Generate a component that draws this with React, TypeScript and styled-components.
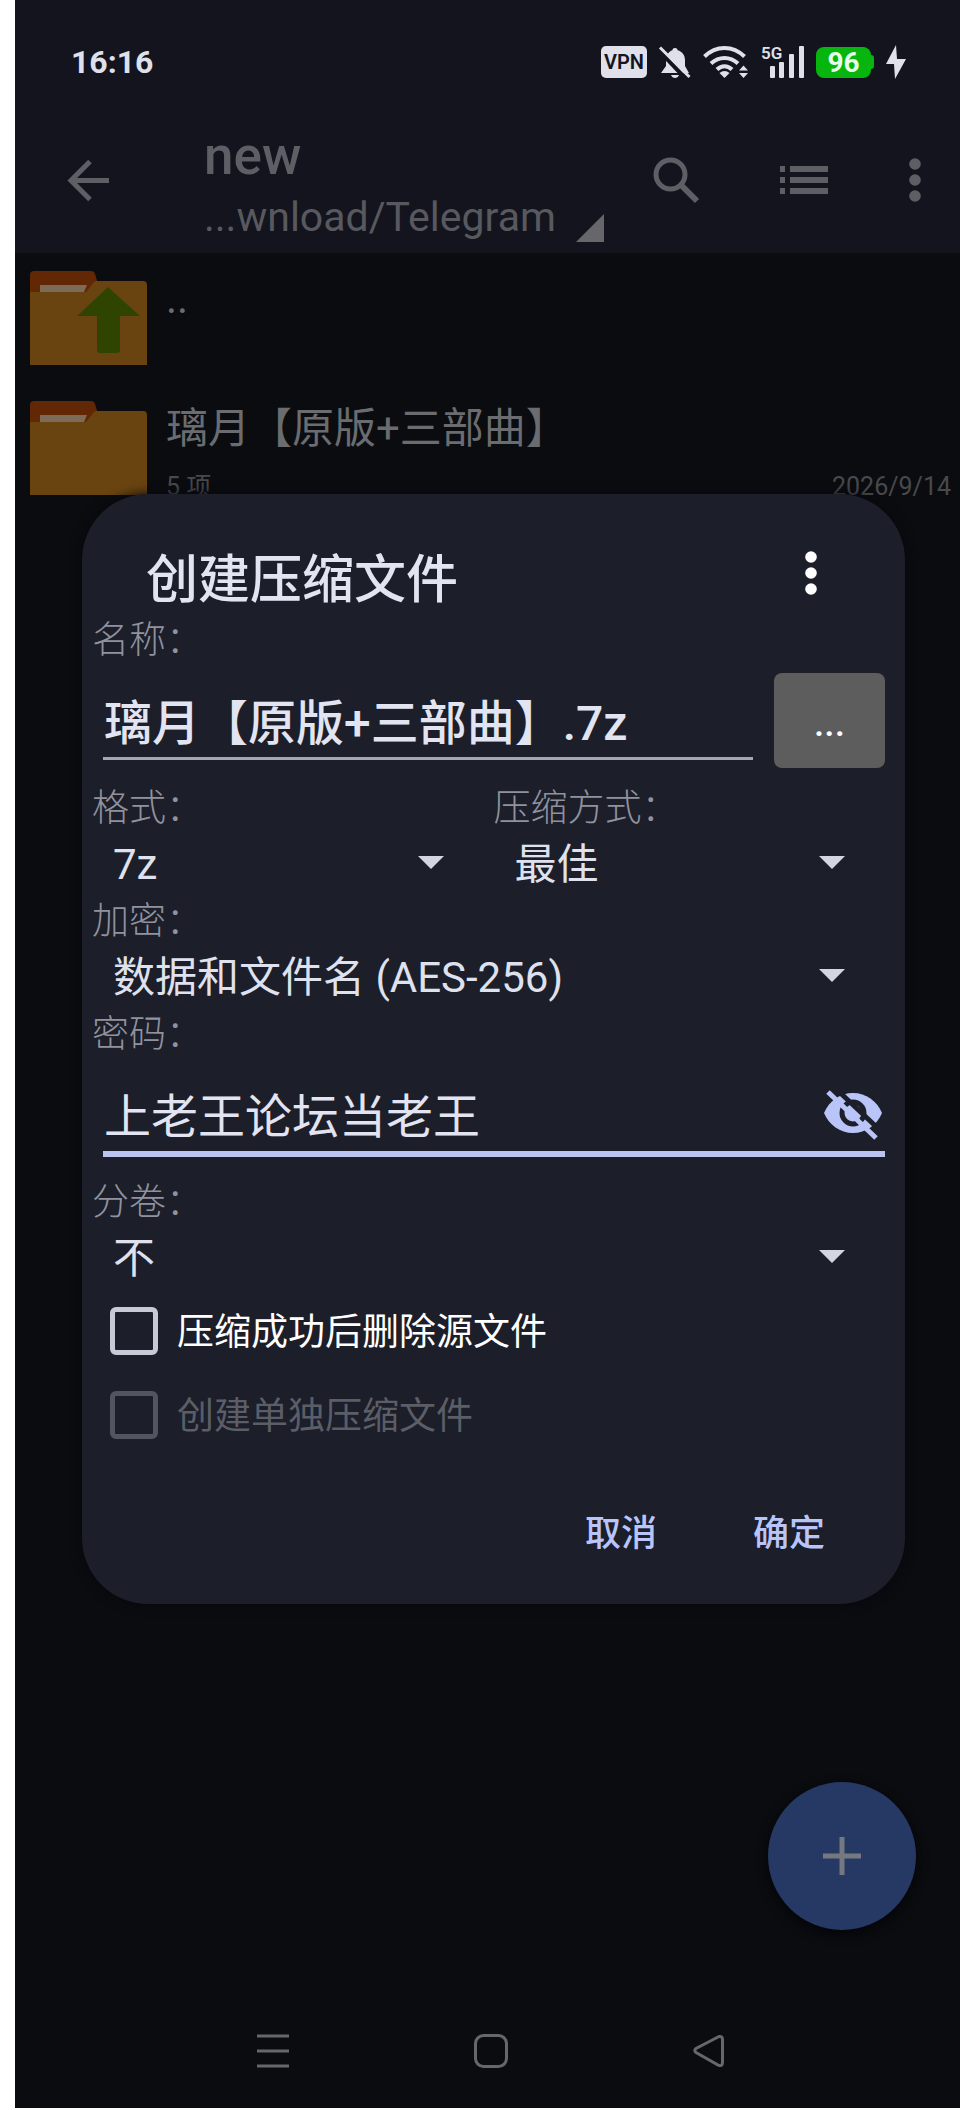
import React, { useState } from 'react';
import styled, { createGlobalStyle } from 'styled-components';

const GlobalStyle = createGlobalStyle`
  *, *::before, *::after { box-sizing: border-box; }
  html, body { margin: 0; background: #ffffff; }
  body, button, input, select {
    font-family: Roboto, "Noto Sans CJK SC", sans-serif;
  }
  h1, h2, p, ul { margin: 0; padding: 0; font-weight: 400; }
  ul { list-style: none; }
  svg { display: block; flex: none; overflow: visible; }
`;

/* ---------- screen ---------- */

const Screen = styled.div`
  position: relative;
  display: flex;
  flex-direction: column;
  min-height: calc(100vh - 2px);
  margin: 0 0 2px 15px;
  background: #0a0c10;
  overflow: hidden;
`;

const Header = styled.header`
  background: #13141e;
`;

const StatusBar = styled.div`
  display: flex;
  align-items: center;
  justify-content: space-between;
  height: 107px;
  padding: 17px 54px 0 56px;
  color: #dfe0ea;
`;

const Clock = styled.time`
  font-size: 32px;
  font-weight: 700;
`;

const StatusIcons = styled.div`
  display: flex;
  align-items: center;
  gap: 12px;
`;

const VpnBadge = styled.span`
  width: 46px;
  border-radius: 5px;
  background: #dfe0ea;
  color: #13141e;
  font-size: 20px;
  font-weight: 600;
  line-height: 32px;
  text-align: center;
`;

const Battery = styled.span`
  display: flex;
  align-items: center;
  color: #e6ffe6;
  font-size: 28px;
  font-weight: 700;
  line-height: 31px;

  span {
    width: 55px;
    border-radius: 8px;
    background: #07b50f;
    text-align: center;
  }

  &::after {
    content: "";
    width: 3px;
    height: 14px;
    border-radius: 0 3px 3px 0;
    background: #07b50f;
  }
`;

const Toolbar = styled.div`
  display: flex;
  align-items: center;
  height: 146px;
  padding: 0 39px 0 42px;
  color: #5e5e64;
`;

const IconButton = styled.button`
  display: flex;
  padding: 0;
  border: 0;
  background: none;
  color: inherit;
  cursor: pointer;
`;

const Location = styled.div`
  flex: 1;
  min-width: 0;
  margin-left: 84px;
  padding-top: 14px;
`;

const FolderTitle = styled.h1`
  font-size: 53px;
  font-weight: 500;
  line-height: 60px;
`;

const FolderPath = styled.button`
  display: flex;
  align-items: flex-end;
  gap: 20px;
  padding: 0;
  border: 0;
  background: none;
  color: #58595f;
  font-size: 41px;
  line-height: 62px;
  white-space: nowrap;

  svg { margin-bottom: 6px; }
`;

const ToolbarActions = styled.div`
  display: flex;
  align-items: center;
  gap: 81px;
`;

/* ---------- file list ---------- */

const FileList = styled.ul`
  flex: 1;
`;

const FileRow = styled.li`
  display: flex;
  gap: 19px;
  height: 130px;
  padding: 17px 9px 0 15px;
`;

const FileText = styled.div`
  flex: 1;
  display: flex;
  flex-direction: column;
`;

const FileName = styled.p`
  color: #6b6c70;
  font-size: 42px;
  line-height: 58px;
`;

const FileMeta = styled.p`
  display: flex;
  justify-content: space-between;
  margin-top: 12px;
  color: #48494c;
  font-size: 25px;
  line-height: 34px;
`;

const AddButton = styled.button`
  position: absolute;
  right: 44px;
  bottom: 178px;
  display: flex;
  align-items: center;
  justify-content: center;
  width: 148px;
  height: 148px;
  border: 0;
  border-radius: 50%;
  background: #263864;
  color: #75797f;
  box-shadow: 0 4px 12px #040508;
`;

const NavBar = styled.nav`
  display: flex;
  align-items: center;
  justify-content: space-around;
  height: 114px;
  padding: 0 142px 0 149px;
  color: #66676a;
`;

/* ---------- dialog ---------- */

const Overlay = styled.div`
  position: absolute;
  inset: 0;
  display: flex;
  align-items: center;
  padding: 0 55px 11px 67px;
`;

const Dialog = styled.form`
  flex: 1;
  min-width: 0;
  padding: 46px 10px 30px;
  border-radius: 66px;
  background: #1c1e29;
  box-shadow: 0 0 12px #07080c;
`;

const DialogHeader = styled.div`
  display: flex;
  align-items: flex-start;
  justify-content: space-between;
  height: 74px;
  padding: 0 78px 0 54px;
  color: #ffffff;
`;

const DialogTitle = styled.h2`
  color: #e2e4f2;
  font-size: 52px;
  font-weight: 500;
  line-height: 82px;
`;

const MenuButton = styled(IconButton)`
  padding-top: 11px;
`;

const Label = styled.label`
  display: block;
  padding-top: 4px;
  color: #90929e;
  font-size: 37px;
  font-weight: 300;
  line-height: 45px;
`;

const FieldRow = styled.div`
  position: relative;
  display: flex;
  align-items: flex-start;
  gap: 21px;
  height: 119px;
  padding: 10px 10px 0 11px;
`;

const TextInput = styled.input<{ $active?: boolean }>`
  flex: 1;
  min-width: 0;
  height: ${(p) => (p.$active ? 90 : 87)}px;
  padding: 8px 0 0 1px;
  border: 0;
  border-bottom: ${(p) => (p.$active ? '6px solid #b9c4f1' : '3px solid #a4a6b4')};
  outline: 0;
  background: none;
  color: #e2e4f2;
  font-size: ${(p) => (p.$active ? 47 : 48)}px;
  font-weight: ${(p) => (p.$active ? 400 : 500)};
`;

const BrowseButton = styled.button`
  width: 111px;
  height: 95px;
  padding: 6px 0 0;
  border: 0;
  border-radius: 8px;
  background: #5d5d5e;
  color: #ffffff;
  font-size: 37px;
  font-weight: 500;
`;

const RevealButton = styled(IconButton)`
  position: absolute;
  right: 13px;
  top: 33px;
  color: #b9c4f8;
`;

const Columns = styled.div`
  display: grid;
  grid-template-columns: 1fr 1fr;
`;

const SelectBox = styled.div`
  display: grid;
  align-items: center;
  color: #d3d5e2;

  select, svg { grid-area: 1 / 1; }
  svg { justify-self: end; margin-right: 50px; pointer-events: none; }
`;

const Select = styled.select`
  width: 100%;
  height: 64px;
  padding: 3px 80px 0 21px;
  border: 0;
  appearance: none;
  background: none;
  color: #dfe1ee;
  font-size: 42px;
`;

const CheckRow = styled.label<{ $muted?: boolean }>`
  display: flex;
  align-items: center;
  gap: 19px;
  height: 84px;
  padding-left: 18px;
  color: ${(p) => (p.$muted ? '#5b5d67' : '#ffffff')};
  font-size: 37px;
  line-height: 49px;

  span { padding-top: 4px; }
`;

const CheckBox = styled.input`
  appearance: none;
  width: 48px;
  height: 48px;
  margin: 0;
  border: 5px solid #c7c9d6;
  border-radius: 6px;

  &:checked { background: #b9c4f8; }
  &:disabled { border-color: #52545f; }
`;

const Actions = styled.div`
  display: flex;
  justify-content: flex-end;
  gap: 46px;
  padding: 29px 45px 0 0;
`;

const TextButton = styled.button`
  width: 122px;
  height: 88px;
  padding: 0;
  border: 0;
  background: none;
  color: #b9c4f8;
  font-size: 36px;
  font-weight: 500;
`;

/* ---------- icons ---------- */

const BellOffIcon = () => (
  <svg width="32" height="32" viewBox="0 0 32 32" fill="none">
    <path d="M16 2c1.600 0 2.400.8 2.600 2.200C23.500 5.500 26 9.500 26 14v6l4 7H2l5-7v-6C7 9.500 9.500 5.500 13.400 4.200 13.600 2.800 14.400 2 16 2Z" fill="#dfe0ea" />
    <path d="M12 29h8c-.8 2-2.200 3-4 3s-3.200-1-4-3Z" fill="#dfe0ea" />
    <path d="M0 4.500 28 34" stroke="#13141e" strokeWidth="4" />
    <path d="M1 1.500 30.500 31" stroke="#dfe0ea" strokeWidth="3" />
  </svg>
);

const WifiIcon = () => (
  <svg width="46" height="32" viewBox="0 0 46 32" fill="none" stroke="#dfe0ea" strokeWidth="4">
    <path d="M1.500 10.500C13-1 30-1 41.500 10.500" />
    <path d="M8 17.500c8-7.500 19-7.500 27 0" />
    <path d="M14 23.500c4.500-4.500 10.500-4.500 15 0" />
    <path d="m16.500 27 5 5 5-5c-3-2.800-7-2.800-10 0Z" fill="#dfe0ea" stroke="none" />
    <path d="m36 24.500 4.500-5 4.500 5Zm0 2.500 4.500 5 4.500-5Z" fill="#dfe0ea" stroke="none" />
  </svg>
);

const SignalIcon = () => (
  <svg width="43" height="38" viewBox="0 -2 43 38" fill="#dfe0ea">
    <text x="0" y="14" fontSize="17" fontWeight="600" fontFamily="Roboto, sans-serif">5G</text>
    <rect x="9" y="21" width="5" height="12" rx="1" />
    <rect x="18" y="17" width="5" height="16" rx="1" />
    <rect x="28" y="9" width="5" height="24" rx="1" />
    <rect x="38" y="1" width="5" height="32" rx="1" />
  </svg>
);

const BoltIcon = () => (
  <svg width="20" height="34" viewBox="0 0 20 34" fill="#dfe0ea">
    <path d="M10 0 0 19h8l1 15L20 14h-9Z" />
  </svg>
);

const BackIcon = () => (
  <svg width="63" height="63" viewBox="0 0 63 63" fill="none" stroke="currentColor" strokeWidth="5">
    <path d="M52 31.500H13.500M33 12.500l-19 19 19 19" />
  </svg>
);

const CornerIcon = () => (
  <svg width="28" height="28" viewBox="0 0 28 28" fill="#66666b">
    <path d="M28 0v28H0Z" />
  </svg>
);

const SearchIcon = () => (
  <svg width="46" height="46" viewBox="0 0 46 46" fill="none" stroke="currentColor" strokeWidth="5">
    <circle cx="17.500" cy="17.500" r="14.500" />
    <path d="m29 29 15 15" strokeWidth="6" />
  </svg>
);

const ListIcon = () => (
  <svg width="48" height="28" viewBox="0 0 48 28" fill="currentColor">
    {[0, 11, 22].map((y) => (
      <React.Fragment key={y}>
        <rect y={y} width="5" height="6" />
        <rect x="10" y={y} width="38" height="6" />
      </React.Fragment>
    ))}
  </svg>
);

const MoreIcon = () => (
  <svg width="12" height="44" viewBox="0 0 12 44" fill="currentColor">
    <circle cx="6" cy="6" r="5.800" />
    <circle cx="6" cy="22" r="5.800" />
    <circle cx="6" cy="38" r="5.800" />
  </svg>
);

const FolderIcon = ({ up }: { up?: boolean }) => (
  <svg width="117" height="96" viewBox="0 0 117 96">
    <path d="M0 24V5q0-4 4-4h57q3 0 4 3l6 20Z" fill="#622805" />
    <path d="M0 22h56l8-10q1-1 3-1h46q4 0 4 4v80H0Z" fill="#694411" />
    <path d="M10 15h47l-3 7H10Z" fill="#7c6b57" />
    {up && <path d="M78 17 47 46h20v34q0 3 3 3h17q3 0 3-3V46h20Z" fill="#304402" />}
  </svg>
);

const PlusIcon = () => (
  <svg width="38" height="38" viewBox="0 0 38 38" stroke="currentColor" strokeWidth="5">
    <path d="M19 0v38M0 19h38" />
  </svg>
);

const CaretIcon = () => (
  <svg width="26" height="13" viewBox="0 0 26 13" fill="currentColor">
    <path d="M0 0h26L13 13Z" />
  </svg>
);

const EyeOffIcon = () => (
  <svg width="58" height="50" viewBox="0 0 58 50" fill="none">
    <path d="M0 23C5 11 16 3 29 3s24 8 29 20c-5 12-16 20-29 20S5 35 0 23Z" fill="currentColor" />
    <circle cx="29" cy="23" r="11" stroke="#1c1e29" strokeWidth="5" />
    <path d="M10-3 60 44" stroke="#1c1e29" strokeWidth="5" />
    <path d="m4 2 48 46" stroke="currentColor" strokeWidth="5" />
  </svg>
);

const RecentsIcon = () => (
  <svg width="32" height="34" viewBox="0 0 32 34" stroke="currentColor" strokeWidth="3">
    <path d="M0 2h32M0 17h32M0 32h32" />
  </svg>
);

const HomeIcon = () => (
  <svg width="34" height="34" viewBox="0 0 34 34" fill="none" stroke="currentColor" strokeWidth="3">
    <rect x="1.500" y="1.500" width="31" height="31" rx="8" />
  </svg>
);

const BackTriangleIcon = () => (
  <svg width="32" height="34" viewBox="0 0 32 34" fill="none" stroke="currentColor" strokeWidth="3">
    <path d="M26 2.500 3 14.500q-2.500 2 0 4L26 31.500q3.500.5 3.500-3v-23q0-3.500-3.500-3Z" />
  </svg>
);

/* ---------- app ---------- */

interface SelectFieldProps {
  id: string;
  label: string;
  options: string[];
}

const SelectField = ({ id, label, options }: SelectFieldProps) => (
  <div>
    <Label htmlFor={id}>{label}</Label>
    <SelectBox>
      <Select id={id}>
        {options.map((o) => (
          <option key={o}>{o}</option>
        ))}
      </Select>
      <CaretIcon />
    </SelectBox>
  </div>
);

export default function App() {
  const [name, setName] = useState('璃月【原版+三部曲】.7z');
  const [password, setPassword] = useState('上老王论坛当老王');

  return (
    <Screen>
      <GlobalStyle />
      <Header>
        <StatusBar>
          <Clock>16:16</Clock>
          <StatusIcons>
            <VpnBadge>VPN</VpnBadge>
            <BellOffIcon />
            <WifiIcon />
            <SignalIcon />
            <Battery><span>96</span></Battery>
            <BoltIcon />
          </StatusIcons>
        </StatusBar>
        <Toolbar>
          <IconButton type="button" aria-label="返回"><BackIcon /></IconButton>
          <Location>
            <FolderTitle>new</FolderTitle>
            <FolderPath type="button">...wnload/Telegram<CornerIcon /></FolderPath>
          </Location>
          <ToolbarActions>
            <IconButton type="button" aria-label="搜索"><SearchIcon /></IconButton>
            <IconButton type="button" aria-label="视图"><ListIcon /></IconButton>
            <IconButton type="button" aria-label="更多"><MoreIcon /></IconButton>
          </ToolbarActions>
        </Toolbar>
      </Header>

      <FileList>
        <FileRow>
          <FolderIcon up />
          <FileText><FileName>..</FileName></FileText>
        </FileRow>
        <FileRow>
          <FolderIcon />
          <FileText>
            <FileName>璃月【原版+三部曲】</FileName>
            <FileMeta><span>5 项</span><span>2026/9/14</span></FileMeta>
          </FileText>
        </FileRow>
      </FileList>

      <AddButton type="button" aria-label="新建"><PlusIcon /></AddButton>

      <NavBar>
        <IconButton type="button" aria-label="最近任务"><RecentsIcon /></IconButton>
        <IconButton type="button" aria-label="主屏幕"><HomeIcon /></IconButton>
        <IconButton type="button" aria-label="返回上一级"><BackTriangleIcon /></IconButton>
      </NavBar>

      <Overlay>
        <Dialog role="dialog" aria-labelledby="dialog-title" onSubmit={(e) => e.preventDefault()}>
          <DialogHeader>
            <DialogTitle id="dialog-title">创建压缩文件</DialogTitle>
            <MenuButton type="button" aria-label="选项"><MoreIcon /></MenuButton>
          </DialogHeader>

          <Label htmlFor="name">名称：</Label>
          <FieldRow>
            <TextInput id="name" type="text" value={name} onChange={(e) => setName(e.target.value)} />
            <BrowseButton type="button">...</BrowseButton>
          </FieldRow>

          <Columns>
            <SelectField id="format" label="格式：" options={['7z', 'zip']} />
            <SelectField id="level" label="压缩方式：" options={['最佳', '标准']} />
          </Columns>
          <SelectField id="encryption" label="加密：" options={['数据和文件名 (AES-256)', '数据 (AES-256)']} />

          <Label htmlFor="password">密码：</Label>
          <FieldRow>
            <TextInput id="password" type="text" $active value={password} onChange={(e) => setPassword(e.target.value)} />
            <RevealButton type="button" aria-label="隐藏密码"><EyeOffIcon /></RevealButton>
          </FieldRow>

          <SelectField id="volumes" label="分卷：" options={['不', '100 MB']} />

          <CheckRow>
            <CheckBox type="checkbox" />
            <span>压缩成功后删除源文件</span>
          </CheckRow>
          <CheckRow $muted>
            <CheckBox type="checkbox" disabled />
            <span>创建单独压缩文件</span>
          </CheckRow>

          <Actions>
            <TextButton type="button">取消</TextButton>
            <TextButton type="submit">确定</TextButton>
          </Actions>
        </Dialog>
      </Overlay>
    </Screen>
  );
}
